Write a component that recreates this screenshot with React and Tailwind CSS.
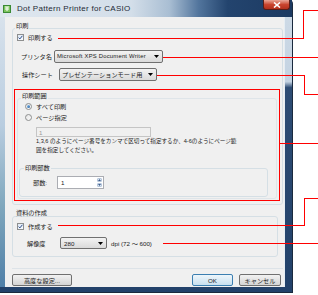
import React from 'react';

const Check = () => (
  <div className="flex h-[7px] w-[7px] items-center justify-center border border-[#8e8f8f] bg-gradient-to-br from-[#dfe9f5] to-[#f8fbfe]">
    <svg width="5" height="5" viewBox="0 0 5 5">
      <path d="M0.6 2.6 L1.9 3.9 L4.4 0.8" fill="none" stroke="#2c4a87" strokeWidth="1" />
    </svg>
  </div>
);

const Radio = ({ on }) => (
  <div className="flex h-[7px] w-[7px] items-center justify-center rounded-full border border-[#8e8f8f] bg-gradient-to-br from-[#e4e4e4] to-[#fbfbfb]">
    {on && <div className="h-[3px] w-[3px] rounded-full bg-gradient-to-br from-[#8cc3f0] to-[#1c5a9c]" />}
  </div>
);

const Arrow = () => (
  <svg width="5" height="3" viewBox="0 0 5 3">
    <path d="M0 0 H5 L2.5 3 Z" fill="#000" />
  </svg>
);

const GroupLabel = ({ children, className }) => (
  <span className={`absolute bg-[#f0f0f0] px-[1px] leading-[7px] ${className}`}>{children}</span>
);

export default function App() {
  return (
    <div className="relative h-[295px] w-[318px] overflow-hidden bg-white font-['Liberation_Sans','Noto_Sans_CJK_JP',sans-serif] text-[6.2px] leading-[7px] text-[#1b1b1b]">
      {/* window */}
      <div className="flex h-[293px] w-[293px] flex-col rounded-t-[4px] border-r border-b border-[#1a2a3e] bg-[linear-gradient(180deg,#cfdbe7_0%,#c4d3e2_28%,#2d4c74_30%,#22416a_100%)]">
        {/* title bar */}
        <div className="relative flex h-[17px] items-center bg-[linear-gradient(90deg,#dfe7ef_0%,#d3dee9_45%,#a9bed3_58%,#52759d_68%,#23446e_78%,#1c3a62_100%)] pl-[3px]">
          <svg width="8" height="8" viewBox="0 0 8 8" className="shrink-0">
            <rect x="0" y="0" width="8" height="8" fill="#3a8a35" />
            <rect x="1" y="1" width="6" height="6" fill="#7cc35d" />
            <path d="M2 2 H6 M4 2 V6 M2 4 H6" stroke="#fff" strokeWidth="1" />
          </svg>
          <span className="ml-[6px] text-[8px] leading-[9px] tracking-[0.3px] text-[#1d2a36]">Dot Pattern Printer for CASIO</span>
          <div className="absolute top-0 right-[2px] flex h-[10px] w-[27px] items-center justify-center rounded-b-[3px] border border-t-0 border-[#5a1d16] bg-gradient-to-b from-[#e8a597] via-[#c9452f] to-[#b3301c]">
            <svg width="8" height="6" viewBox="0 0 8 6">
              <path d="M1 0.5 L7 5.5 M7 0.5 L1 5.5" stroke="#fff" strokeWidth="1.6" />
            </svg>
          </div>
        </div>

        <div className="flex flex-1">
          <div className="w-[5px] bg-[linear-gradient(180deg,#d8e2ec_0%,#b9cde0_40%,#7fa7bd_70%,#4f7fa8_100%)]" />
          {/* client */}
          <div className="flex w-[279px] flex-col bg-[#f0f0f0] pl-[7px]">
            {/* 印刷 group */}
            <div className="relative mt-[11px] flex h-[177px] w-[271px] flex-col rounded-[3px] border border-[#d5dfe5]">
              <GroupLabel className="-top-[7px] left-[2px]">印刷</GroupLabel>
              <div className="mt-[5px] ml-[4px] flex h-[7px] items-center">
                <Check />
                <span className="ml-[4px]">印刷する</span>
              </div>
              <div className="mt-[9px] flex h-[13px] items-center">
                <span className="ml-[8px] w-[33px]">プリンタ名</span>
                <div className="flex h-[13px] w-[109px] items-center justify-between rounded-[2px] border border-[#707070] bg-gradient-to-b from-[#f3f3f3] to-[#dadada] pr-[3px] pl-[2px]">
                  <span className="text-[5.9px] tracking-[0.2px]">Microsoft XPS Document Writer</span>
                  <Arrow />
                </div>
              </div>
              <div className="mt-[5px] flex h-[13px] items-center">
                <span className="ml-[9px] w-[37px]">操作シート</span>
                <div className="flex h-[13px] w-[98px] items-center justify-between rounded-[2px] border border-[#707070] bg-gradient-to-b from-[#f3f3f3] to-[#dadada] pr-[3px] pl-[2px]">
                  <span>プレゼンテーションモード用</span>
                  <Arrow />
                </div>
              </div>

              {/* 印刷範囲 */}
              <div className="relative mt-[17px] ml-[4px] flex h-[101px] w-[260px] flex-col rounded-[3px] border border-[#dfe5e9]">
                <GroupLabel className="-top-[7px] left-[3px]">印刷範囲</GroupLabel>
                <div className="mt-[4px] ml-[7px] flex h-[7px] items-center">
                  <Radio on />
                  <span className="ml-[4px]">すべて印刷</span>
                </div>
                <div className="mt-[4px] ml-[7px] flex h-[7px] items-center">
                  <Radio />
                  <span className="ml-[4px]">ページ指定</span>
                </div>
                <div className="mt-[6px] ml-[18px] flex h-[10px] w-[115px] items-center border border-[#c5c5c5] bg-[#f0f0f0] pl-[2px] text-[#9a9a9a]">1</div>
                <p className="ml-[18px] text-[5.6px] leading-[9px] whitespace-nowrap">
                  1,3,6 のようにページ番号をカンマで区切って指定するか、4-6のようにページ範
                  <br />
                  囲を指定してください。
                </p>
                {/* 印刷部数 */}
                <div className="relative mt-[13px] ml-[1px] flex h-[29px] w-[249px] flex-col rounded-[3px] border border-[#d5dfe5]">
                  <GroupLabel className="-top-[5px] left-[4px]">印刷部数</GroupLabel>
                  <div className="mt-[7px] flex h-[13px] items-center">
                    <span className="ml-[13px] w-[24px]">部数:</span>
                    <div className="flex h-[13px] w-[47px] items-center justify-between border border-[#abadb3] bg-white pl-[3px]">
                      <span>1</span>
                      <div className="flex h-full w-[7px] flex-col gap-px p-px">
                        <div className="flex flex-1 items-center justify-center rounded-[1px] border border-[#b5c6db] bg-[#e3ecf6]">
                          <svg width="3" height="2" viewBox="0 0 3 2"><path d="M0 2 L1.5 0 L3 2 Z" fill="#3a5a8a" /></svg>
                        </div>
                        <div className="flex flex-1 items-center justify-center rounded-[1px] border border-[#b5c6db] bg-[#e3ecf6]">
                          <svg width="3" height="2" viewBox="0 0 3 2"><path d="M0 0 L3 0 L1.5 2 Z" fill="#3a5a8a" /></svg>
                        </div>
                      </div>
                    </div>
                  </div>
                </div>
              </div>
            </div>

            {/* 資料の作成 group */}
            <div className="relative mt-[11px] flex h-[41px] w-[266px] flex-col rounded-[3px] border border-[#d5dfe5]">
              <GroupLabel className="-top-[8px] left-[2px]">資料の作成</GroupLabel>
              <div className="mt-[6px] ml-[4px] flex h-[7px] items-center">
                <Check />
                <span className="ml-[4px]">作成する</span>
              </div>
              <div className="mt-[7px] flex h-[12px] items-center">
                <span className="ml-[14px] w-[33px]">解像度</span>
                <div className="flex h-[12px] w-[47px] items-center justify-between rounded-[2px] border border-[#707070] bg-gradient-to-b from-[#f3f3f3] to-[#dadada] pr-[3px] pl-[3px]">
                  <span>280</span>
                  <Arrow />
                </div>
                <span className="ml-[4px]">dpi (72 ～ 600)</span>
              </div>
            </div>
            <div className="mt-[11px] h-px w-[271px] bg-[#dde3e8]" />

            {/* buttons */}
            <div className="mt-[5px] flex h-[12px] items-center pr-[3px]">
              <div className="flex h-[12px] w-[60px] items-center justify-center rounded-[2px] border border-[#707070] bg-gradient-to-b from-[#f2f2f2] to-[#d4d4d4]">高度な設定...</div>
              <div className="flex-1" />
              <div className="flex h-[12px] w-[41px] items-center justify-center rounded-[2px] border border-[#3c7fb1] bg-gradient-to-b from-[#eef6fb] to-[#c9e0ef]">OK</div>
              <div className="ml-[6px] flex h-[12px] w-[42px] items-center justify-center rounded-[2px] border border-[#707070] bg-gradient-to-b from-[#f2f2f2] to-[#d4d4d4]">キャンセル</div>
            </div>
          </div>
          <div className="flex-1 border-l border-[#e6edf3]" />
        </div>
        <div className="h-[5px]" />
      </div>

      {/* annotation lines */}
      <svg className="pointer-events-none absolute inset-0" width="318" height="295" viewBox="0 0 318 295" shapeRendering="crispEdges">
        <g fill="none" stroke="#f00" strokeWidth="1">
          <polyline points="58,38.5 303.5,38.5 303.5,10.5 318,10.5" />
          <polyline points="163,57.5 318,57.5" />
          <polyline points="157,75.5 304.5,75.5 304.5,94.5 318,94.5" />
          <rect x="14.5" y="89.5" width="265" height="111" />
          <polyline points="279.5,143.5 318,143.5" />
          <polyline points="58,225.5 304.5,225.5 304.5,198.5 318,198.5" />
          <polyline points="163,243.5 318,243.5" />
        </g>
      </svg>
    </div>
  );
}
